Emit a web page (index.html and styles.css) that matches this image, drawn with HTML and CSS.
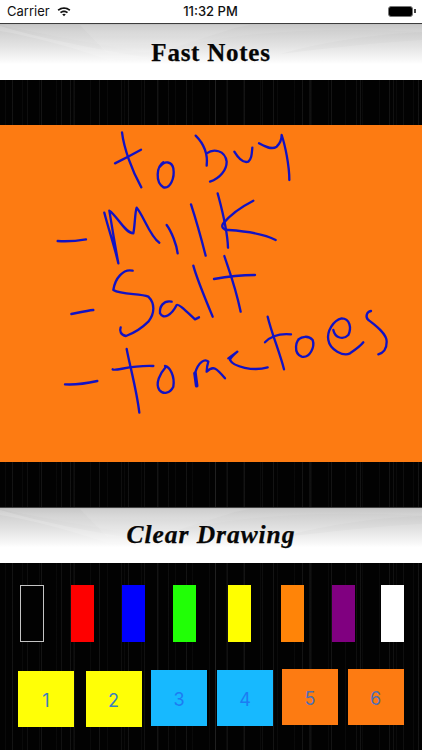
FILE: index.html
```html
<!DOCTYPE html>
<html lang="en">
<head>
<meta charset="utf-8">
<title>Fast Notes</title>
<link rel="stylesheet" href="styles.css">
</head>
<body>
<div class="screen">
  <div class="status">
    <div class="status-left">
      <span>Carrier</span>
      <svg class="wifi" viewBox="0 0 14 11" width="14" height="11">
        <path d="M0.6 3.6C4.2 0.3 9.8 0.3 13.4 3.6L12.2 4.9C9.3 2.3 4.7 2.3 1.8 4.9Z"/>
        <path d="M2.9 6C5.3 3.9 8.7 3.9 11.1 6L9.9 7.2C8.2 5.8 5.8 5.8 4.1 7.2Z"/>
        <path d="M5.2 8.3C6.3 7.5 7.7 7.5 8.8 8.3L7 10.3Z"/>
      </svg>
    </div>
    <span class="clock">11:32 PM</span>
    <div class="battery"><span class="battery-body"></span><span class="battery-tip"></span></div>
  </div>

  <header class="bar bar-top">
    <svg class="gloss" viewBox="0 0 422 56" preserveAspectRatio="none" aria-hidden="true">
      <path class="g1" d="M0 1H422V8C330 3 230 6 150 30C110 22 50 12 0 1Z"/>
      <path class="g2" d="M80 1L108 30L160 28L235 4L250 1Z"/>
      <path class="g3" d="M0 2C40 14 90 24 150 34L108 36C70 22 30 12 0 7Z"/>
      <path class="g4" d="M280 30C330 16 380 10 422 8V16C380 18 330 24 280 30Z"/>
    </svg>
    <h1 class="title">Fast Notes</h1>
  </header>

  <div class="spacer"></div>

  <div class="canvas">
    <svg class="ink" viewBox="0 0 1266 1011" width="422" height="337" fill="none" aria-label="Handwritten note">
      <!-- to buy -->
      <path d="M366 22C372 70 395 135 424 187"/>
      <path d="M345 115Q385 95 423 74"/>
      <path d="M490 112C470 125 465 170 490 187C510 192 525 160 520 130C515 110 495 105 480 125"/>
      <path d="M587 32C605 50 625 80 620 122M620 85C640 70 675 75 680 110C680 135 660 160 630 170"/>
      <path d="M703 80C715 100 730 115 745 110C755 100 755 90 757 68"/>
      <path d="M777 55C795 65 815 75 830 65C840 55 845 40 845 30C855 60 868 120 868 165"/>
      <!-- Milk -->
      <path d="M173 348C200 350 235 347 258 343"/>
      <path d="M313 263C325 310 345 370 355 415C345 360 335 300 328 257C350 270 375 325 400 325C405 300 405 260 410 248C430 270 450 335 478 353"/>
      <path d="M500 300C515 320 530 360 533 385"/>
      <path d="M573 238C590 290 605 345 617 392"/>
      <path d="M653 205C665 250 682 310 684 368"/>
      <path d="M760 227C725 245 690 270 670 295C662 305 670 315 685 315C730 318 790 325 827 345"/>
      <!-- Salt -->
      <path d="M214 567C235 563 260 557 280 555"/>
      <path d="M398 437C370 430 345 460 340 495C365 510 420 505 445 515C465 535 465 565 445 590C425 610 400 625 378 633C362 630 358 618 362 607"/>
      <path d="M515 530C490 525 478 545 480 565C490 585 515 570 530 540C535 535 560 560 585 583L597 577"/>
      <path d="M580 422C590 460 615 520 638 575"/>
      <path d="M673 393C685 430 705 480 722 560"/>
      <path d="M642 462C680 455 720 450 765 450"/>
      <!-- tomatoes -->
      <path d="M195 778C225 780 260 775 292 768"/>
      <path d="M380 672C390 725 410 795 418 863"/>
      <path d="M338 733C345 740 390 720 460 723"/>
      <path d="M498 725C480 745 465 775 478 795C490 810 510 805 520 785C525 755 510 725 495 723"/>
      <path class="thick" d="M585 745L590 782"/>
      <path d="M585 745C595 710 615 700 625 710C620 725 620 740 620 740C640 720 650 730 675 760"/>
      <path d="M685 700L712 680C700 690 692 698 690 705C700 725 760 740 803 727"/>
      <path d="M803 575C815 625 840 685 852 733"/>
      <path d="M795 652C815 630 840 625 873 628"/>
      <path d="M905 638C885 645 880 685 905 695C930 700 945 665 938 645C925 630 905 635 895 643"/>
      <path d="M1000 615C1005 640 1030 645 1045 630C1055 610 1050 580 1025 580C1000 585 980 620 985 645C990 675 1030 695 1050 685C1065 675 1080 665 1090 652"/>
      <path d="M1113 558C1100 560 1095 575 1105 585C1125 600 1160 625 1160 650C1160 675 1150 683 1135 688"/>
    </svg>
  </div>

  <div class="spacer"></div>

  <div class="bar bar-clear">
    <svg class="gloss" viewBox="0 0 422 56" preserveAspectRatio="none" aria-hidden="true">
      <path class="g1" d="M0 1H422V8C330 3 230 6 150 30C110 22 50 12 0 1Z"/>
      <path class="g2" d="M80 1L108 30L160 28L235 4L250 1Z"/>
      <path class="g3" d="M0 2C40 14 90 24 150 34L108 36C70 22 30 12 0 7Z"/>
      <path class="g4" d="M280 30C330 16 380 10 422 8V16C380 18 330 24 280 30Z"/>
    </svg>
    <span class="title title-clear">Clear Drawing</span>
  </div>

  <div class="tools">
    <div class="swatches">
      <span class="swatch none"></span>
      <span class="swatch red"></span>
      <span class="swatch blue"></span>
      <span class="swatch green"></span>
      <span class="swatch yellow"></span>
      <span class="swatch orange"></span>
      <span class="swatch purple"></span>
      <span class="swatch white"></span>
    </div>
    <div class="pages">
      <button class="page lemon p1">1</button>
      <button class="page lemon p2">2</button>
      <button class="page sky p3">3</button>
      <button class="page sky p4">4</button>
      <button class="page amber p5">5</button>
      <button class="page amber p6">6</button>
    </div>
  </div>
</div>
</body>
</html>
```
FILE: styles.css
```css
* { box-sizing: border-box; }
html, body { margin: 0; padding: 0; }
body { background: #000; }

.screen {
  width: 422px;
  height: 750px;
  overflow: hidden;
  display: flex;
  flex-direction: column;
  background-color: #020202;
  background-image:
    repeating-linear-gradient(90deg, transparent 0 12px, rgba(255,255,255,.07) 12px 13px, transparent 13px 29px),
    repeating-linear-gradient(90deg, transparent 0 27px, rgba(255,255,255,.05) 27px 28px, transparent 28px 47px),
    repeating-linear-gradient(90deg, transparent 0 5px, rgba(255,255,255,.03) 5px 6px, transparent 6px 17px),
    repeating-linear-gradient(90deg, transparent 0 61px, rgba(255,255,255,.06) 61px 62px, transparent 62px 83px);
}

.status {
  height: 24px;
  flex: none;
  background: #fff;
  border-bottom: 1px solid #3c3c3c;
  display: flex;
  align-items: center;
  justify-content: space-between;
  padding: 0 6px 1px 7px;
  font: 13px "Inter", "Liberation Sans", sans-serif;
  color: #111;
}
.status-left { display: flex; align-items: center; gap: 7px; width: 100px; }
.wifi { fill: #111; }
.clock { font-weight: 500; margin-right: 2px; }
.battery { display: flex; align-items: center; justify-content: flex-end; width: 100px; }
.battery-body { width: 25px; height: 11px; border-radius: 3px; background: #000; border: 1px solid #777; }
.battery-tip { width: 1.5px; height: 4px; background: #444; margin-left: 1px; }

.bar {
  height: 56px;
  flex: none;
  position: relative;
  display: flex;
  align-items: flex-start;
  justify-content: center;
  background: linear-gradient(180deg, #c2c2c2 0, #d0d0d0 12%, #e2e2e2 38%, #f6f6f6 62%, #fff 72%, #fff 100%);
}
.bar-clear { border-top: 1px solid #444; }
.gloss { position: absolute; inset: 0; width: 100%; height: 100%; }
.g1 { fill: rgba(255,255,255,.07); }
.g2 { fill: rgba(255,255,255,.1); }
.g3 { fill: rgba(255,255,255,.16); }
.g4 { fill: rgba(120,120,120,.04); }

.title {
  position: relative;
  margin: 16px 0 0;
  font: bold 25px/1 "Liberation Serif", serif;
  letter-spacing: .75px;
  color: #060606;
  -webkit-text-stroke: .25px #060606;
}
.title-clear {
  margin-top: 14px;
  font-style: italic;
  font-size: 25.5px;
  letter-spacing: .95px;
}

.spacer { height: 45px; flex: none; }

.canvas {
  height: 337px;
  flex: none;
  background: #fd7b12;
}
.ink { display: block; stroke: #1212c4; stroke-width: 7; stroke-linecap: round; stroke-linejoin: round; }
.thick { stroke-width: 11; }

.tools { flex: 1; }

.swatches {
  display: flex;
  align-items: flex-start;
  padding: 22px 0 0 20px;
}
.swatch { display: block; width: 23px; height: 57px; }
.none { width: 24px; background: #020202; border: 1.5px solid #c4c4c4; }
.red { margin-left: 27px; background: #fe0000; }
.blue { margin-left: 28px; background: #0000fe; }
.green { margin-left: 28px; background: #21ff06; }
.yellow { margin-left: 32px; background: #ffff00; }
.orange { margin-left: 30px; background: #ff8408; }
.purple { margin-left: 28px; background: #800080; }
.white { margin-left: 26px; background: #fff; }

.pages {
  display: flex;
  align-items: flex-start;
  padding: 27px 0 0 18px;
}
.page {
  width: 56px;
  height: 56px;
  padding: 2px 0 0;
  border: 0;
  font: 18px "Inter", "Liberation Sans", sans-serif;
  display: flex;
  align-items: center;
  justify-content: center;
}
.lemon { background: #ffff06; color: #3c7fbe; }
.sky { background: #17b9ff; color: #1d7cf2; }
.amber { background: #fd7b12; color: #4f6fb4; }
.p1 { margin-top: 2px; }
.p2 { margin: 2px 0 0 11.5px; }
.p3 { margin: 1px 0 0 9.5px; }
.p4 { margin: 1px 0 0 10px; }
.p5 { margin: 0 0 0 9px; }
.p6 { margin: 0 0 0 9.5px; }
```
